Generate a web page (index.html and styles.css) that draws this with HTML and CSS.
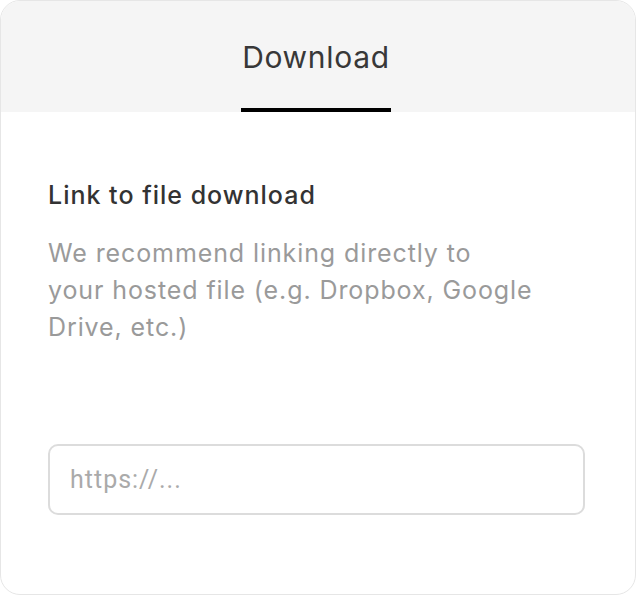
FILE: index.html
```html
<!DOCTYPE html>
<html>
<head>
<meta charset="utf-8">
<link rel="stylesheet" href="styles.css">
</head>
<body>
<div class="card">
  <div class="tabs">
    <div class="tab active">Download</div>
  </div>
  <div class="content">
    <h2 class="label">Link to file download</h2>
    <p class="help">We recommend linking directly to<br>your hosted file (e.g. Dropbox, Google Drive, etc.)</p>
    <input class="url" type="text" placeholder="https://...">
  </div>
</div>
</body>
</html>
```
FILE: styles.css
```css
html, body {
  margin: 0;
  padding: 0;
  background: #ffffff;
}
.card {
  box-sizing: border-box;
  width: 636px;
  height: 595px;
  border: 1px solid #e6e6e6;
  border-radius: 20px;
  overflow: hidden;
  background: #fff;
  font-family: Inter, "Noto Sans", sans-serif;
}
.tabs {
  height: 111px;
  background: #f5f5f5;
  display: flex;
  justify-content: center;
  align-items: flex-end;
  padding-right: 4px;
}
.tab {
  width: 150px;
  box-sizing: border-box;
  text-align: center;
  font-size: 30px;
  letter-spacing: 0.7px;
  color: #383838;
  padding-bottom: 33px;
  line-height: 36px;
  border-bottom: 4px solid #000;
}
.content {
  padding: 0 51px 0 47px;
}
.label {
  margin: 67px 0 0;
  font-size: 25px;
  font-weight: 500;
  letter-spacing: 1px;
  color: #333;
  line-height: 32px;
}
.help {
  margin: 24px 0 0;
  font-size: 25px;
  letter-spacing: 0.9px;
  line-height: 37px;
  color: #9a9a9a;
  width: 500px;
}
.url {
  display: block;
  box-sizing: border-box;
  margin-top: 98px;
  width: 537px;
  height: 71px;
  border: 2px solid #dcdcdc;
  border-radius: 10px;
  padding: 0 20px;
  font-family: Roboto, "Liberation Sans", sans-serif;
  font-size: 25px;
  letter-spacing: 1px;
  color: #333;
  outline: none;
}
.url::placeholder {
  color: #aaa;
}
```
